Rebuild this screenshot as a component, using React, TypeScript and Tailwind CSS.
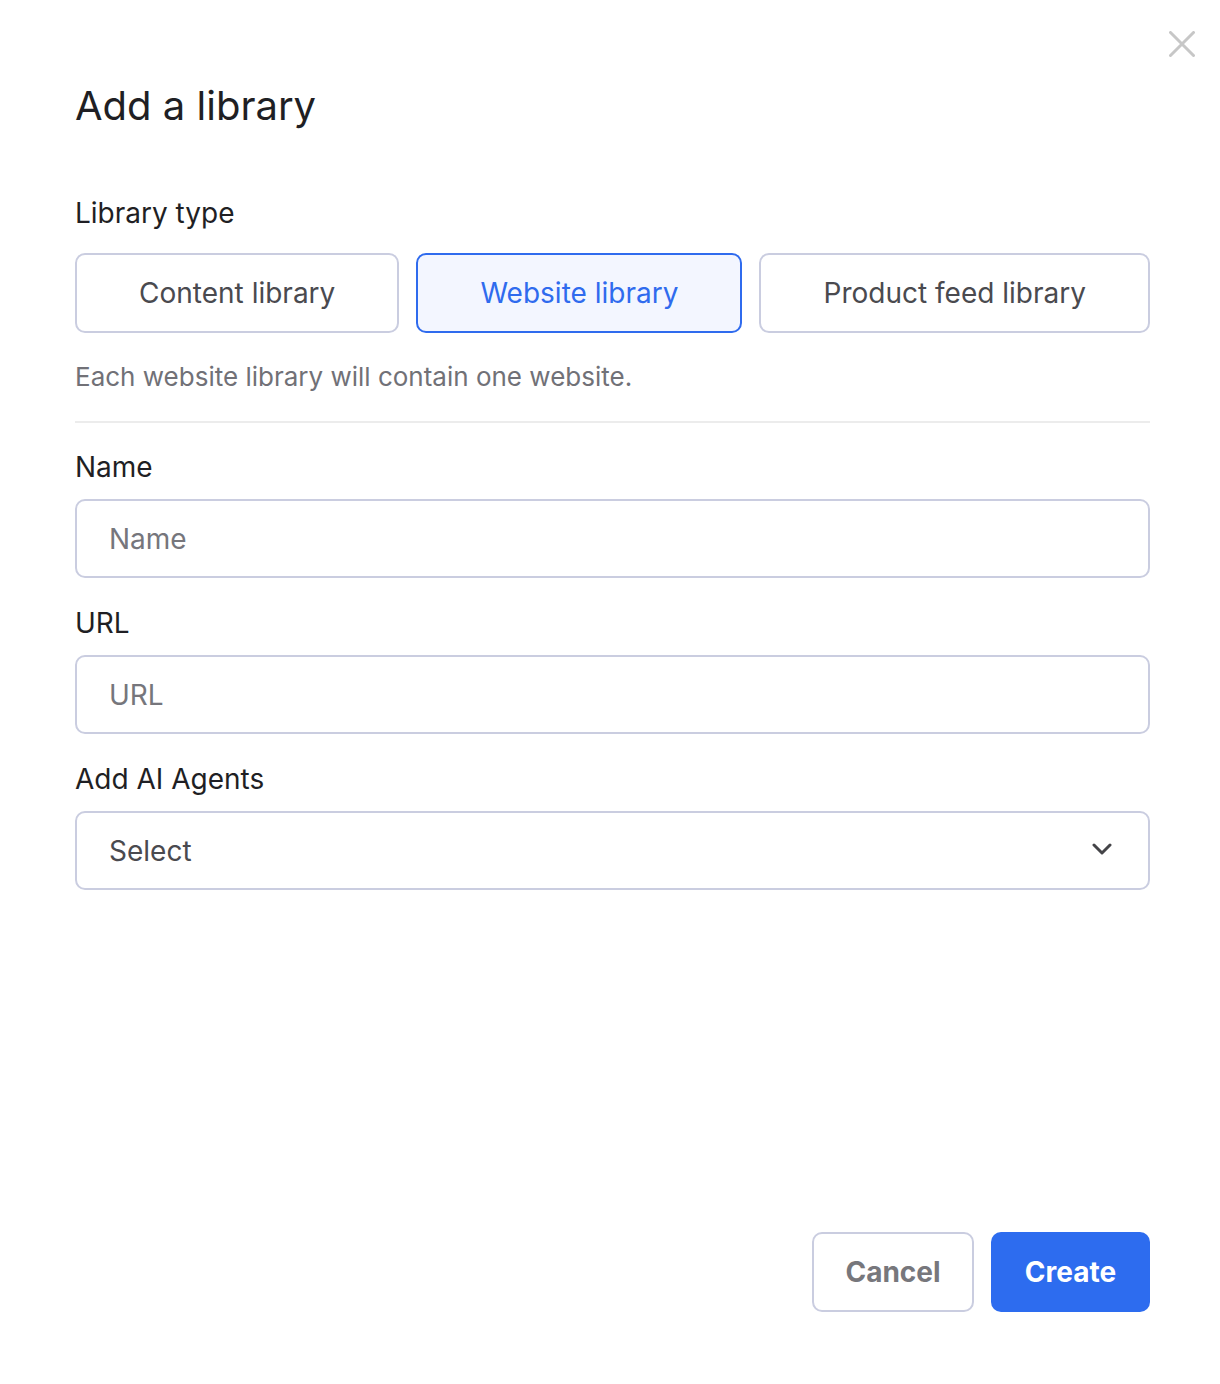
import React, { useState } from 'react';

type LibraryType = 'content' | 'website' | 'product';

const types: { id: LibraryType; label: string }[] = [
  { id: 'content', label: 'Content library' },
  { id: 'website', label: 'Website library' },
  { id: 'product', label: 'Product feed library' },
];

export default function App() {
  const [selected, setSelected] = useState<LibraryType>('website');

  return (
    <div
      className="relative min-h-[1384px] w-full bg-white pl-[75px] pr-[70px] pt-[82px] text-[#1f1f24]"
      style={{ fontFamily: 'Inter, "Noto Sans", sans-serif' }}
    >
      {/* Close */}
      <button className="absolute right-[25px] top-[31px] h-[26px] w-[26px]">
        <svg viewBox="0 0 26 26" width="26" height="26" fill="none" stroke="#c7c7c7" strokeWidth="3" strokeLinecap="round">
          <path d="M1.5 1.5L24.5 24.5M24.5 1.5L1.5 24.5" />
        </svg>
      </button>

      <h1 className="text-[40px] leading-[48px] font-normal text-[#1f1f24]">Add a library</h1>

      <div className="mt-[66px] text-[28px] leading-[34px]">Library type</div>

      <div className="mt-[23px] flex gap-[17px]">
        {types.map(t => (
          <button
            key={t.id}
            onClick={() => setSelected(t.id)}
            className={`h-[80px] flex-auto whitespace-nowrap rounded-[10px] border-2 px-0 text-[28px] ${
              selected === t.id
                ? 'border-[#2f6bee] bg-[#f3f6ff] text-[#2f6bee]'
                : 'border-[#cacde0] bg-white text-[#4a4a4f]'
            }`}
          >
            {t.label}
          </button>
        ))}
      </div>

      <p className="mt-[28px] text-[26px] leading-[32px] text-[#717177]">
        Each website library will contain one website.
      </p>

      <div className="mt-[28px] h-[2px] bg-[#ececec]" />

      <div className="mt-[27px] text-[28px] leading-[34px]">Name</div>
      <input
        placeholder="Name"
        className="mt-[15px] block h-[79px] w-full rounded-[10px] border-2 border-[#cacde0] px-[32px] text-[28px] outline-none placeholder:text-[#76767c]"
      />

      <div className="mt-[28px] text-[28px] leading-[34px]">URL</div>
      <input
        placeholder="URL"
        className="mt-[15px] block h-[79px] w-full rounded-[10px] border-2 border-[#cacde0] px-[32px] text-[28px] outline-none placeholder:text-[#76767c]"
      />

      <div className="mt-[28px] text-[28px] leading-[34px]">Add AI Agents</div>
      <button className="mt-[15px] flex h-[79px] w-full items-center justify-between rounded-[10px] border-2 border-[#cacde0] pl-[32px] pr-[36px] text-[28px] text-[#4a4a4f]">
        <span>Select</span>
        <svg viewBox="0 0 20 12" width="20" height="12" fill="none" stroke="#444448" strokeWidth="3" strokeLinecap="round" strokeLinejoin="round" className="-mt-[4px]">
          <path d="M2 2L10 10L18 2" />
        </svg>
      </button>

      <div className="mt-[342px] flex justify-end gap-[17px]">
        <button className="h-[80px] w-[162px] rounded-[10px] border-2 border-[#cacde0] bg-white text-[28px] font-bold text-[#77777c]">
          Cancel
        </button>
        <button className="h-[80px] w-[159px] rounded-[10px] bg-[#2d6cef] text-[28px] font-bold text-white">
          Create
        </button>
      </div>
    </div>
  );
}
